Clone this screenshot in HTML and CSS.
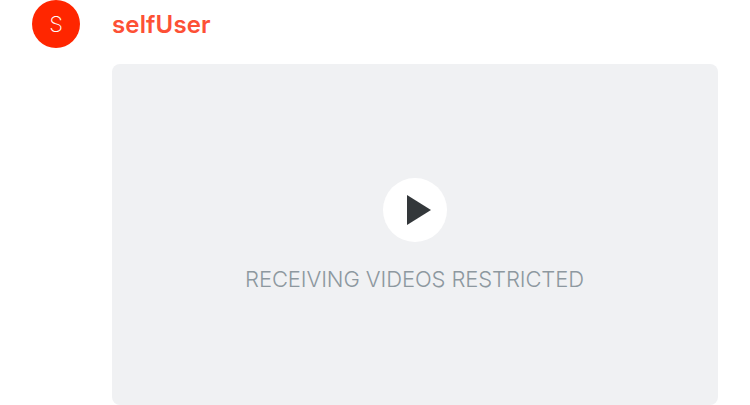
FILE: index.html
```html
<!DOCTYPE html>
<html lang="en">
<head>
<meta charset="utf-8">
<title>Message</title>
<link rel="stylesheet" href="styles.css">
</head>
<body>
<article class="message">
  <header class="sender">
    <div class="avatar">S</div>
    <div class="name">selfUser</div>
  </header>
  <section class="video">
    <div class="play">
      <svg width="64" height="64" viewBox="0 0 64 64" aria-hidden="true"><path d="M24 17V47L48 32Z" fill="#33373a"/></svg>
    </div>
    <div class="label">RECEIVING VIDEOS RESTRICTED</div>
  </section>
</article>
</body>
</html>
```

FILE: styles.css
```css
body {
  margin: 0;
  background: #fff;
  font-family: Inter, "Liberation Sans", sans-serif;
}

.message {
  display: flex;
  flex-direction: column;
  gap: 16px;
  height: 405px;
  padding: 0 32px;
  box-sizing: border-box;
}

.sender {
  display: flex;
  align-items: center;
  gap: 32px;
  height: 48px;
}

.avatar {
  width: 48px;
  height: 48px;
  border-radius: 50%;
  background: #ff2600;
  color: #fff;
  font-size: 22px;
  font-weight: 200;
  line-height: 48px;
  text-align: center;
}

.name {
  padding-top: 2px;
  color: #fd5035;
  font-size: 24px;
  font-weight: 600;
  letter-spacing: 0.15px;
  line-height: 48px;
}

.video {
  display: flex;
  flex: 1;
  flex-direction: column;
  align-items: center;
  gap: 24px;
  margin-left: 80px;
  padding-top: 114px;
  border-radius: 8px;
  background: #f0f1f3;
}

.play {
  width: 64px;
  height: 64px;
  border-radius: 50%;
  background: #fff;
}

.play svg {
  display: block;
}

.label {
  color: #8d989f;
  font-size: 22px;
  font-weight: 300;
  letter-spacing: -0.1px;
  line-height: 27px;
  padding-right: 1px;
  white-space: nowrap;
}
```
